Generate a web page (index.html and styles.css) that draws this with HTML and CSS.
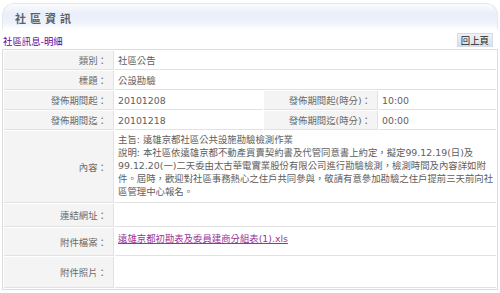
FILE: index.html
```html
<!DOCTYPE html>
<html lang="zh-TW">
<head>
    <meta charset="UTF-8">
    <title>社區資訊</title>
    <link rel="stylesheet" href="styles.css">
</head>
<body>

<div class="banner">
    <h1>社區資訊</h1>
</div>

<div class="toolbar">
    <span class="crumb">社區訊息-明細</span>
    <button class="back-button">回上頁</button>
</div>

<table class="detail">
    <tr>
        <th>類別：</th>
        <td colspan="3">社區公告</td>
    </tr>
    <tr>
        <th>標題：</th>
        <td colspan="3">公設勘驗</td>
    </tr>
    <tr>
        <th>發佈期間起：</th>
        <td class="half">20101208</td>
        <th class="wide">發佈期間起(時分)：</th>
        <td>10:00</td>
    </tr>
    <tr>
        <th>發佈期間迄：</th>
        <td class="half">20101218</td>
        <th class="wide">發佈期間迄(時分)：</th>
        <td>00:00</td>
    </tr>
    <tr class="content-row">
        <th>內容：</th>
        <td colspan="3">主旨: 遠雄京都社區公共設施勘驗檢測作業<br>說明: 本社區依遠雄京都不動產買賣契約書及代管同意書上約定，擬定99.12.19(日)及<br>99.12.20(一)二天委由太古華電實業股份有限公司進行勘驗檢測，檢測時間及內容詳如附<br>件。屆時，歡迎對社區事務熱心之住戶共同參與，敬請有意參加勘驗之住戶提前三天前向社<br>區管理中心報名。</td>
    </tr>
    <tr class="link-row">
        <th>連結網址：</th>
        <td colspan="3"></td>
    </tr>
    <tr class="file-row">
        <th>附件檔案：</th>
        <td colspan="3"><a href="#">遠雄京都初勘表及委員建商分組表(1).xls</a></td>
    </tr>
    <tr class="photo-row">
        <th>附件照片：</th>
        <td colspan="3"></td>
    </tr>
</table>

</body>
</html>
```

FILE: styles.css
```css
body {
    font-family: "DejaVu Sans", "Noto Sans CJK TC", sans-serif;
    font-size: 9.4px;
    color: #666;
    background: #fff;
    margin: 0;
    padding: 3px 2px 0 2px;
}
.banner {
    height: 25px;
    border: 1px solid #e4e8ee;
    border-bottom: none;
    border-radius: 12px 12px 0 0;
    background: linear-gradient(to bottom, #fbfcfe 0%, #e9eef9 40%, #eef2fb 75%, #ffffff 100%);
    display: flex;
    align-items: center;
}
h1 {
    margin: 3px 0 0 12px;
    font-family: "Noto Sans CJK TC", sans-serif;
    font-size: 11px;
    font-weight: bold;
    letter-spacing: 4px;
    color: #57626e;
}
.toolbar {
    display: flex;
    justify-content: space-between;
    align-items: flex-end;
    height: 18px;
    padding: 0 5px 2px 1px;
}
.crumb {
    color: #660099;
    line-height: 12px;
    margin-bottom: -1px;
}
.back-button {
    font-family: inherit;
    font-size: 9.4px;
    line-height: 11px;
    color: #222;
    padding: 1px 3px 0 3px;
    border: 1px solid #d6dce6;
    background: linear-gradient(to bottom, #eef2f8, #d8e0ee);
    cursor: pointer;
}
.detail {
    width: 100%;
    border: 1px solid #dcdcdc;
    border-spacing: 1px;
}
.detail th, .detail td {
    border-bottom: 1px solid #e2e2e2;
    height: 16px;
    padding: 1px 3px;
    font-weight: normal;
    vertical-align: middle;
}
.detail th {
    width: 100px;
    text-align: right;
    color: #6a6a6a;
    background: #f4f4f4;
    border-right: 1px solid #e2e2e2;
    padding-right: 6px;
}
.detail td {
    text-align: left;
    color: #5e5e5e;
    background: #fff;
}
.detail td.half {
    width: 142px;
}
.detail th.wide {
    width: 104px;
}
.content-row td {
    line-height: 13px;
    padding: 2px 1px 4px 3px;
}
.link-row th {
    height: 20px;
}
.file-row th {
    height: 25px;
}
.file-row td {
    vertical-align: top;
    padding-top: 3px;
}
.photo-row th {
    height: 28px;
}
.detail a {
    color: #993399;
}
```
